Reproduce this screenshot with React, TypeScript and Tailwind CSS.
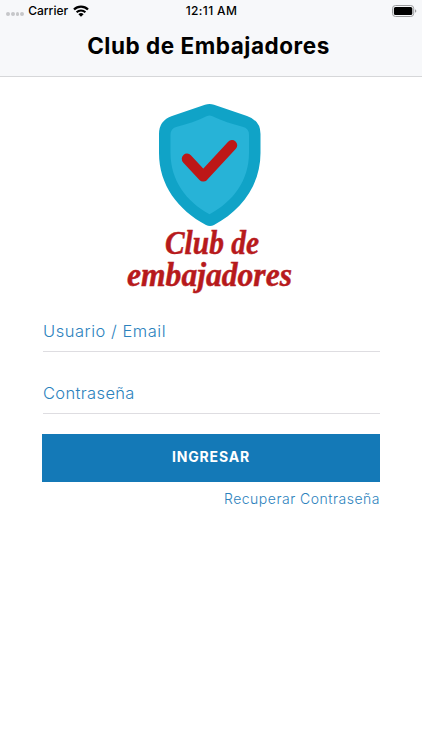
import { useState } from "react";

function WifiIcon() {
  return (
    <svg className="ml-[5px] h-[12px] w-[16px]" viewBox="0 0 16 12" fill="none">
      <path d="M1 4.500a9.900 9.900 0 0 1 14 0" stroke="#000" strokeWidth="2.300" />
      <path d="M3.600 7.300a6.200 6.200 0 0 1 8.800 0" stroke="#000" strokeWidth="2" />
      <path d="M8 11.800 5.400 9.200a3.700 3.700 0 0 1 5.200 0z" fill="#000" />
    </svg>
  );
}

function BatteryIcon() {
  return (
    <svg className="h-[12px] w-[25px]" viewBox="0 0 25 12" fill="none">
      <rect x="0.5" y="0.5" width="21.2" height="11" rx="3" stroke="#9b9c9e" />
      <rect x="1.9" y="1.9" width="18.4" height="8.2" rx="1.6" fill="#000" />
      <path d="M23 4.2v3.6c1.8-.7 1.8-2.9 0-3.6z" fill="#9b9c9e" />
    </svg>
  );
}

function StatusBar() {
  return (
    <div className="grid h-5 grid-cols-[1fr_auto_1fr] items-center pt-px pr-[5px] pl-[6px] font-['Inter',sans-serif] text-[12px] leading-none font-medium text-black">
      <div className="flex items-center">
        <div className="mt-[7px] mr-[4px] flex gap-[1px]">
          {[0, 1, 2, 3].map((dot) => (
            <span key={dot} className="size-[3.8px] rounded-full bg-[#c6c7c9]" />
          ))}
        </div>
        <span>Carrier</span>
        <WifiIcon />
      </div>
      <span className="tracking-[0.35px]">12:11 AM</span>
      <div className="flex justify-end">
        <BatteryIcon />
      </div>
    </div>
  );
}

function Logo() {
  return (
    <svg className="ml-[120px] block h-[200px] w-[180px]" viewBox="120 100 180 200">
      {/* Shield */}
      <path
        d="M205 104.800q4.500-1.600 9 0L247 116q13.500 4.500 13.500 18v19c0 32-19 57-46.500 72q-4 2.200-8 0C178 210 159 185 159 153v-19q0-13.500 13-18z"
        fill="#10a3c7"
      />
      <path
        d="M206.500 116.200q3-1.600 6 0c10 4.500 19 7.800 30 10.500q6.500 1.500 6.500 8V153c0 27-15.500 48.500-39.500 61.300C186 201.500 170.500 180 170.500 153v-18.300q0-6.500 6.500-8c11-2.700 20-6 29.500-10.500z"
        fill="#27b3d7"
      />
      <path
        d="m187 158.800 16.300 17.500 28.700-31"
        fill="none"
        stroke="#bd1717"
        strokeWidth="10.500"
        strokeLinecap="round"
        strokeLinejoin="round"
      />
      {/* Wordmark */}
      <g
        className="font-['Liberation_Serif',serif] font-bold italic"
        fill="#b71a1c"
        stroke="#b71a1c"
        strokeWidth="0.5"
        fontSize="33"
      >
        <text x="165" y="254" textLength="94" lengthAdjust="spacingAndGlyphs">
          Club de
        </text>
        <text x="127" y="285.500" textLength="165" lengthAdjust="spacingAndGlyphs">
          embajadores
        </text>
      </g>
    </svg>
  );
}

interface FieldProps {
  type: string;
  label: string;
  className: string;
}

function Field({ type, label, className }: FieldProps) {
  const [value, setValue] = useState("");

  return (
    <input
      type={type}
      value={value}
      placeholder={label}
      aria-label={label}
      onChange={(e) => setValue(e.target.value)}
      className={`block h-[40px] w-[337px] border-b border-[#dedde1] bg-transparent pb-px text-[16.5px] font-light text-[#2c82bd] outline-none placeholder:text-[#2c82bd] placeholder:opacity-100 ${className}`}
    />
  );
}

export default function App() {
  return (
    <div className="h-[750px] w-[422px] overflow-hidden bg-white font-['Inter',sans-serif]">
      <header className="h-[77px] border-b border-[#d6d7d9] bg-[#f7f8fa]">
        <StatusBar />
        <h1 className="mt-[10px] pr-[5px] text-center text-[22.5px] leading-8 font-bold tracking-[0.53px] text-black">
          Club de Embajadores
        </h1>
      </header>

      <main className="pt-[23px]">
        <Logo />
        <form className="ml-[43px]" onSubmit={(e) => e.preventDefault()}>
          <div className="pt-[12px]">
            <Field type="text" label="Usuario / Email" className="tracking-[0.53px]" />
          </div>
          <div className="pt-[22px]">
            <Field type="password" label="Contraseña" className="tracking-[0.35px]" />
          </div>
          <button
            type="submit"
            className="mt-5 -ml-px block h-[48px] w-[338px] bg-[#1479b7] pb-[3px] text-[14px] font-bold tracking-[0.8px] text-white"
          >
            INGRESAR
          </button>
          <a
            href="#"
            className="mt-[7px] block w-[337px] text-right text-[14px] leading-5 font-light tracking-[0.5px] text-[#2c82bd]"
          >
            Recuperar Contraseña
          </a>
        </form>
      </main>
    </div>
  );
}
